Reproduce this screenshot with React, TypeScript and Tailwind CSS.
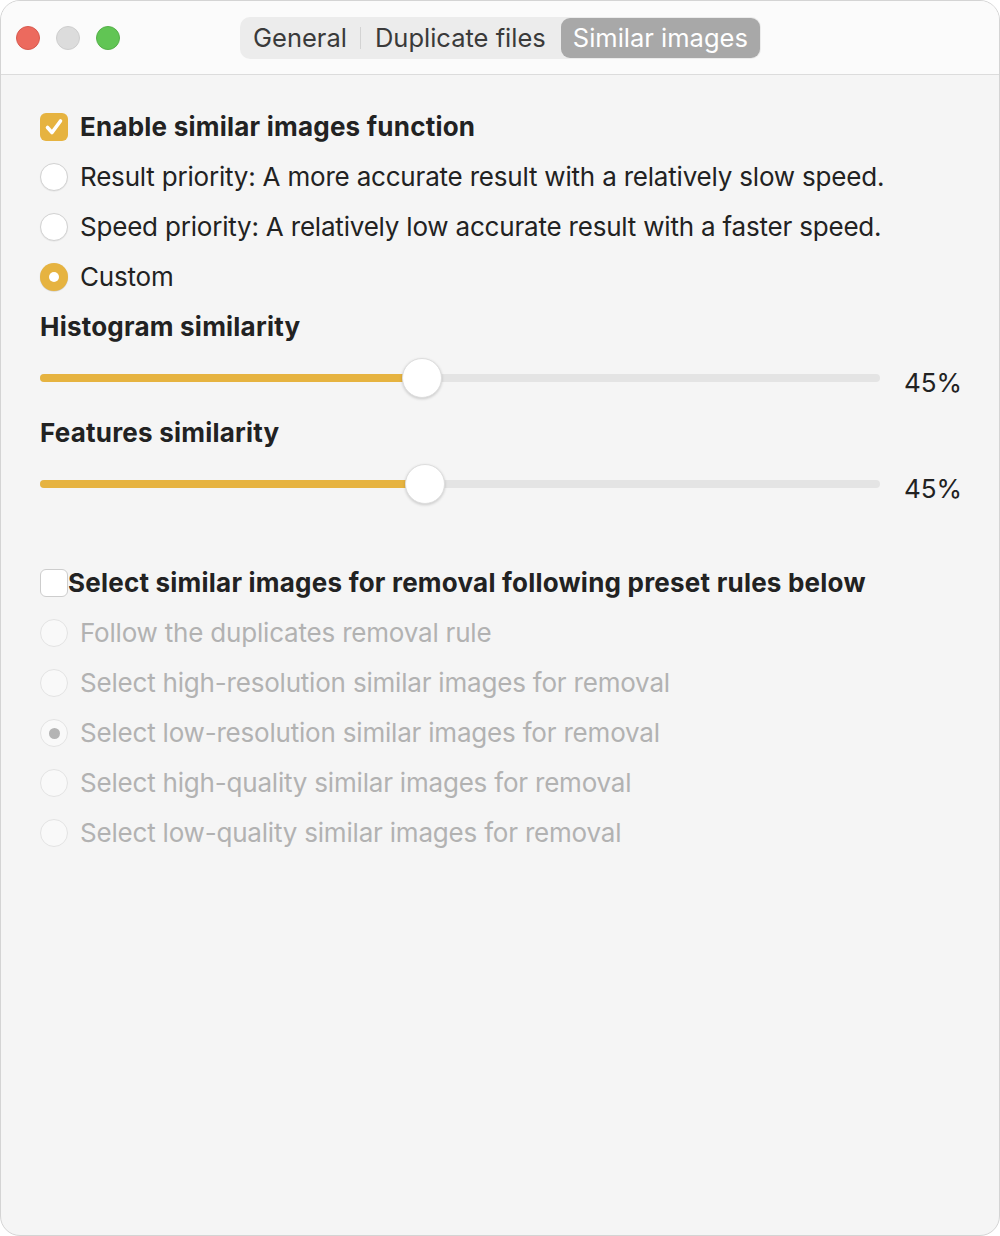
import React from "react";

function Radio({ checked = false, disabled = false }: { checked?: boolean; disabled?: boolean }) {
  if (checked && !disabled) {
    return (
      <div className="w-[28px] h-[28px] rounded-full bg-[#e6b340] flex items-center justify-center shrink-0 shadow-[0_0.5px_1px_rgba(0,0,0,0.2)]">
        <div className="w-[10px] h-[10px] rounded-full bg-white" />
      </div>
    );
  }
  if (disabled) {
    return (
      <div className="w-[28px] h-[28px] rounded-full bg-[#f9f9f9] border border-[#e3e3e3] flex items-center justify-center shrink-0">
        {checked && <div className="w-[11px] h-[11px] rounded-full bg-[#b4b4b4]" />}
      </div>
    );
  }
  return (
    <div className="w-[28px] h-[28px] rounded-full bg-white border border-[#d2d2d2] shrink-0 shadow-[0_0.5px_1px_rgba(0,0,0,0.08)]" />
  );
}

function RadioRow({ label, checked, disabled }: { label: string; checked?: boolean; disabled?: boolean }) {
  return (
    <div className="h-[50px] flex items-center gap-[12px]">
      <Radio checked={checked} disabled={disabled} />
      <span className={disabled ? "text-[#b2b2b2] tracking-[-0.2px]" : "text-[#222222] tracking-[-0.2px]"}>{label}</span>
    </div>
  );
}

function Slider({ value, thumbX }: { value: string; thumbX: number }) {
  return (
    <div className="h-[56px] flex items-start">
      <div className="relative w-[840px] h-[52px] flex items-center">
        <div className="w-full h-[8px] rounded-full bg-[#e4e4e4] overflow-hidden">
          <div className="h-full bg-[#e6b340]" style={{ width: thumbX }} />
        </div>
        <div
          className="absolute top-[6px] w-[40px] h-[40px] rounded-full bg-white border border-[#dedede] shadow-[0_1px_3px_rgba(0,0,0,0.18)]"
          style={{ left: thumbX - 20 }}
        />
      </div>
      <div className="ml-[24px] h-[62px] flex items-center text-[#222222]">{value}</div>
    </div>
  );
}

export default function App() {
  return (
    <div
      className="w-[1000px] h-[1236px] bg-[#ffffff] text-[26px] leading-none"
      style={{ fontFamily: "Inter, 'Noto Sans', sans-serif" }}
    >
      <div className="w-full h-full rounded-[20px] overflow-hidden border border-[#d4d4d4] bg-[#f5f5f5] flex flex-col">
        <div className="h-[74px] shrink-0 bg-[#fbfbfb] border-b border-[#dcdcdc] flex items-center pl-[15px]">
          <div className="flex items-center gap-[16px]">
            <div className="w-[24px] h-[24px] rounded-full bg-[#ec6a5e] border border-[#d85a4f]" />
            <div className="w-[24px] h-[24px] rounded-full bg-[#dcdcdc] border border-[#cecece]" />
            <div className="w-[24px] h-[24px] rounded-full bg-[#61c554] border border-[#55b049]" />
          </div>
          <div className="ml-[120px] h-[42px] rounded-[10px] bg-[#ececec] flex items-center text-[25.5px] text-[#3a3a3a]">
            <div className="px-[13px]">General</div>
            <div className="w-px h-[22px] bg-[#d3d3d3]" />
            <div className="px-[14px]">Duplicate files</div>
            <div className="h-[40px] ml-[1px] mr-[1px] px-[12px] rounded-[9px] bg-[#a8a8a8] text-white flex items-center">
              Similar images
            </div>
          </div>
        </div>

        <div className="pl-[39px] pt-[27px] flex flex-col">
          <div className="h-[50px] flex items-center gap-[12px]">
            <div className="w-[28px] h-[28px] rounded-[6px] bg-[#e6b340] flex items-center justify-center shrink-0">
              <svg width="22" height="22" viewBox="0 0 22 22" fill="none">
                <path d="M4.5 11.5 L9 16.5 L17.5 5" stroke="white" strokeWidth="3.6" strokeLinecap="round" strokeLinejoin="round" />
              </svg>
            </div>
            <span className="font-bold text-[#222222] tracking-[0.22px]">Enable similar images function</span>
          </div>
          <RadioRow label="Result priority: A more accurate result with a relatively slow speed." />
          <RadioRow label="Speed priority: A relatively low accurate result with a faster speed." />
          <RadioRow label="Custom" checked />
          <div className="h-[50px] flex items-center font-bold text-[#222222] tracking-[0.22px]">Histogram similarity</div>
          <Slider value="45%" thumbX={382} />
          <div className="h-[50px] flex items-center font-bold text-[#222222] tracking-[0.22px]">Features similarity</div>
          <Slider value="45%" thumbX={385} />

          <div className="h-[50px] mt-[44px] flex items-center">
            <div className="w-[28px] h-[28px] rounded-[6px] bg-white border border-[#cdcdcd] shrink-0" />
            <span className="font-bold text-[#222222] tracking-[0.22px]">Select similar images for removal following preset rules below</span>
          </div>
          <RadioRow label="Follow the duplicates removal rule" disabled />
          <RadioRow label="Select high-resolution similar images for removal" disabled />
          <RadioRow label="Select low-resolution similar images for removal" disabled checked />
          <RadioRow label="Select high-quality similar images for removal" disabled />
          <RadioRow label="Select low-quality similar images for removal" disabled />
        </div>
      </div>
    </div>
  );
}
